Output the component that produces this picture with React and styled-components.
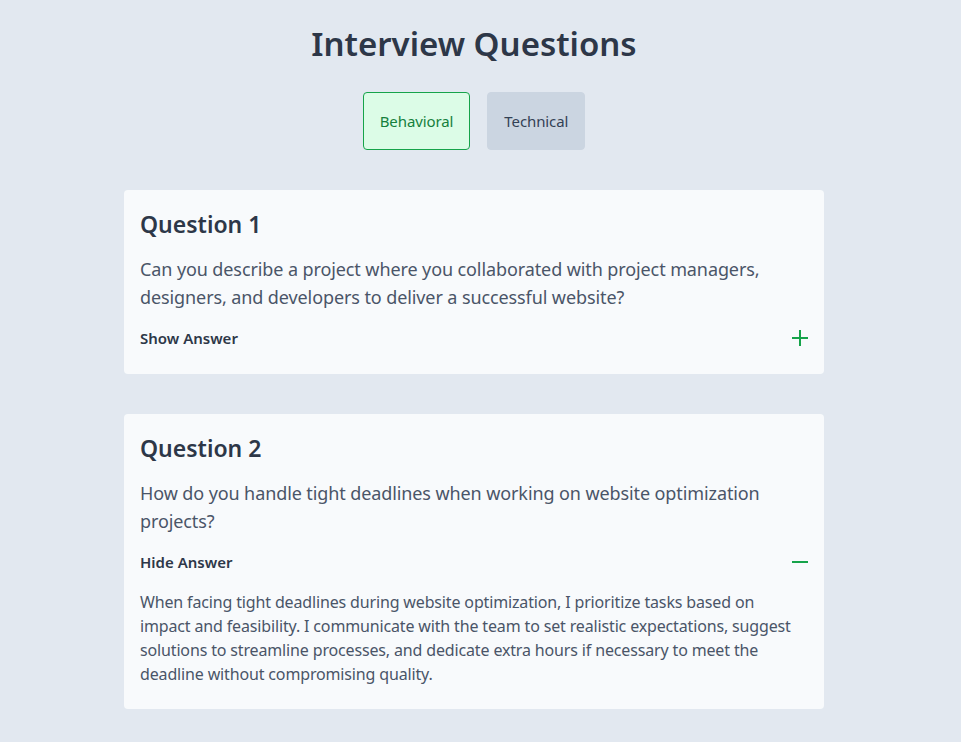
import React, { useState } from 'react';
import styled, { createGlobalStyle } from 'styled-components';

const GlobalStyle = createGlobalStyle`
  * { box-sizing: border-box; }
  body {
    margin: 0;
    background: #e2e8f0;
    font-family: "Segoe UI", "Noto Sans", "Open Sans", sans-serif;
    color: #2d3748;
  }
`;

const Page = styled.div`
  padding: 20px 13px 32px 0;
  min-height: 742px;
`;

const Container = styled.div`
  max-width: 700px;
  margin: 0 auto;
`;

const Title = styled.h1`
  margin: 0 0 24px;
  text-align: center;
  font-size: 33px;
  line-height: 48px;
  font-weight: 600;
  color: #2d3748;
`;

const Tabs = styled.div`
  display: flex;
  justify-content: center;
  gap: 17px;
  margin-bottom: 40px;
`;

const Tab = styled.button`
  height: 58px;
  padding: 0 16px;
  border-radius: 4px;
  font-family: inherit;
  font-size: 15px;
  letter-spacing: -0.1px;
  cursor: pointer;
  border: 1px solid ${p => (p.active ? '#16a34a' : '#cbd5e1')};
  background: ${p => (p.active ? '#dcfce7' : '#cbd5e1')};
  color: ${p => (p.active ? '#15803d' : '#334155')};
`;

const List = styled.div`
  display: flex;
  flex-direction: column;
  gap: 40px;
`;

const Card = styled.div`
  background: #f8fafc;
  border-radius: 4px;
  padding: 16px;
`;

const QuestionTitle = styled.h2`
  margin: 0 0 13px;
  font-size: 23px;
  line-height: 36px;
  font-weight: 600;
  color: #2d3748;
`;

const QuestionText = styled.p`
  margin: 0 0 7px;
  font-size: 18px;
  line-height: 28px;
  letter-spacing: -0.1px;
  color: #4a5568;
`;

const Toggle = styled.button`
  display: flex;
  width: 100%;
  align-items: center;
  justify-content: space-between;
  padding: 8px 0;
  border: 0;
  background: none;
  font-family: inherit;
  font-size: 15px;
  line-height: 24px;
  font-weight: 600;
  color: #2d3748;
  cursor: pointer;
`;

const Answer = styled.p`
  margin: 8px 0 7px;
  font-size: 16px;
  line-height: 24px;
  letter-spacing: -0.15px;
  color: #4a5568;
`;

const Icon = ({ open }) => (
  <svg width="16" height="16" viewBox="0 0 16 16">
    <path d="M0 8h16" stroke="#16a34a" strokeWidth="2" />
    {!open && <path d="M8 0v16" stroke="#16a34a" strokeWidth="2" />}
  </svg>
);

const questions = {
  Behavioral: [
    {
      q: 'Can you describe a project where you collaborated with project managers, designers, and developers to deliver a successful website?',
      a: 'I worked closely with the project manager to define scope, with designers to refine layouts, and with developers to ship a responsive, accessible site on schedule.',
    },
    {
      q: 'How do you handle tight deadlines when working on website optimization projects?',
      a: 'When facing tight deadlines during website optimization, I prioritize tasks based on impact and feasibility. I communicate with the team to set realistic expectations, suggest solutions to streamline processes, and dedicate extra hours if necessary to meet the deadline without compromising quality.',
    },
  ],
  Technical: [
    {
      q: 'How would you improve the load time of a slow website?',
      a: 'I would audit assets, compress images, lazy-load content and cache responses.',
    },
  ],
};

const QuestionCard = ({ index, item, initialOpen }) => {
  const [open, setOpen] = useState(initialOpen);
  return (
    <Card>
      <QuestionTitle>Question {index + 1}</QuestionTitle>
      <QuestionText>{item.q}</QuestionText>
      <Toggle onClick={() => setOpen(!open)}>
        {open ? 'Hide Answer' : 'Show Answer'}
        <Icon open={open} />
      </Toggle>
      {open && <Answer>{item.a}</Answer>}
    </Card>
  );
};

export default function App() {
  const [tab, setTab] = useState('Behavioral');
  return (
    <Page>
      <GlobalStyle />
      <Container>
        <Title>Interview Questions</Title>
        <Tabs>
          {['Behavioral', 'Technical'].map(t => (
            <Tab key={t} active={tab === t} onClick={() => setTab(t)}>
              {t}
            </Tab>
          ))}
        </Tabs>
        <List>
          {questions[tab].map((item, i) => (
            <QuestionCard key={tab + i} index={i} item={item} initialOpen={tab === 'Behavioral' && i === 1} />
          ))}
        </List>
      </Container>
    </Page>
  );
}
